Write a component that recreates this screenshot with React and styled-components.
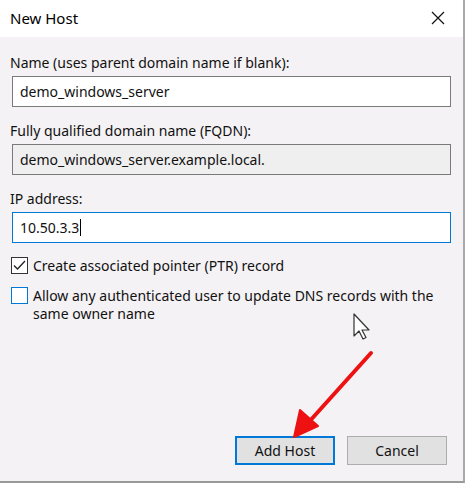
import styled, { createGlobalStyle } from 'styled-components';

const GlobalStyle = createGlobalStyle`
    html, body {
        margin: 0;
        padding: 0;
        background: #f5f2f5;
    }
    * {
        box-sizing: border-box;
    }
`;

const Window = styled.div`
    position: relative;
    width: 465px;
    height: 483px;
    display: flex;
    flex-direction: column;
    background: #f5f2f5;
    border-right: 2px solid #a9a9a9;
    border-bottom: 2px solid #999999;
    font-family: 'Noto Sans', 'Open Sans', sans-serif;
    font-size: 14px;
    color: #111;
`;

const TitleBar = styled.div`
    height: 37px;
    background: #ffffff;
    display: flex;
    align-items: center;
    justify-content: space-between;
    padding: 0 12px 2px 10px;
    font-size: 15px;
    color: #000;
`;

const CloseButton = styled.div`
    width: 18px;
    height: 18px;
    display: flex;
    align-items: center;
    justify-content: center;
    margin-right: 4px;
`;

const Body = styled.div`
    flex: 1;
    display: flex;
    flex-direction: column;
    padding: 16px 12px 16px 10px;
`;

const Field = styled.div`
    display: flex;
    flex-direction: column;
    gap: 3px;
    margin-bottom: 14px;
`;

const Label = styled.label`
    line-height: 20px;
`;

const TextBox = styled.div`
    height: 31px;
    margin-left: 2px;
    display: flex;
    align-items: center;
    padding-left: 7px;
    background: ${(props) => (props.$readOnly ? '#f0eff0' : '#ffffff')};
    border: 1px solid ${(props) => (props.$focused ? '#0078d7' : '#7a7a7a')};
`;

const Caret = styled.span`
    display: inline-block;
    width: 1px;
    height: 17px;
    background: #000;
    margin-left: 1px;
`;

const CheckRow = styled.div`
    display: flex;
    align-items: flex-start;
    gap: 5px;
    margin-bottom: 12px;
    padding-left: 1px;
    line-height: 18px;
`;

const CheckBox = styled.div`
    flex: none;
    width: 17px;
    height: 17px;
    background: #fff;
    border: 1px solid ${(props) => (props.$hover ? '#0078d7' : '#333333')};
    display: flex;
    align-items: center;
    justify-content: center;
`;

const Buttons = styled.div`
    margin-top: auto;
    display: flex;
    justify-content: flex-end;
    gap: 12px;
    padding-right: 4px;
`;

const Button = styled.button`
    width: 100px;
    height: 29px;
    background: #e1e1e1;
    border: ${(props) => (props.$primary ? '2px solid #0078d7' : '1px solid #adadad')};
    font-family: inherit;
    font-size: 14px;
    color: #111;
    padding: 0;
`;

const Overlay = styled.svg`
    position: absolute;
    left: 0;
    top: 0;
    pointer-events: none;
`;

const App = () => {
    return (
        <>
            <GlobalStyle />
            <Window>
                <TitleBar>
                    <span>New Host</span>
                    <CloseButton>
                        <svg width="14" height="14" viewBox="0 0 14 14">
                            <path d="M1 1 L13 13 M13 1 L1 13" stroke="#111" strokeWidth="1.2" />
                        </svg>
                    </CloseButton>
                </TitleBar>
                <Body>
                    <Field>
                        <Label>Name (uses parent domain name if blank):</Label>
                        <TextBox>demo_windows_server</TextBox>
                    </Field>
                    <Field>
                        <Label>Fully qualified domain name (FQDN):</Label>
                        <TextBox $readOnly>demo_windows_server.example.local.</TextBox>
                    </Field>
                    <Field>
                        <Label>IP address:</Label>
                        <TextBox $focused>
                            10.50.3.3
                            <Caret />
                        </TextBox>
                    </Field>
                    <CheckRow>
                        <CheckBox>
                            <svg width="13" height="11" viewBox="0 0 13 11">
                                <path d="M1 5.5 L4.5 9 L12 1" fill="none" stroke="#222" strokeWidth="1.3" />
                            </svg>
                        </CheckBox>
                        <span>Create associated pointer (PTR) record</span>
                    </CheckRow>
                    <CheckRow>
                        <CheckBox $hover />
                        <span>
                            Allow any authenticated user to update DNS records with the
                            <br />
                            same owner name
                        </span>
                    </CheckRow>
                    <Buttons>
                        <Button $primary>Add Host</Button>
                        <Button>Cancel</Button>
                    </Buttons>
                </Body>
                <Overlay width="465" height="483" viewBox="0 0 465 483">
                    {/* mouse pointer */}
                    <path
                        d="M354 314 L354 336 L359 331 L363 339 L366 337.5 L362 330 L369 330 Z"
                        fill="#fff"
                        stroke="#333"
                        strokeWidth="1.2"
                        strokeLinejoin="round"
                    />
                    {/* red arrow */}
                    <line x1="371" y1="353" x2="308" y2="423" stroke="#ee1111" strokeWidth="4" strokeLinecap="round" />
                    <path d="M294 437 L300 410 L318 426 Z" fill="#ee1111" stroke="#ee1111" strokeWidth="2" strokeLinejoin="round" />
                </Overlay>
            </Window>
        </>
    );
};

export default App;
